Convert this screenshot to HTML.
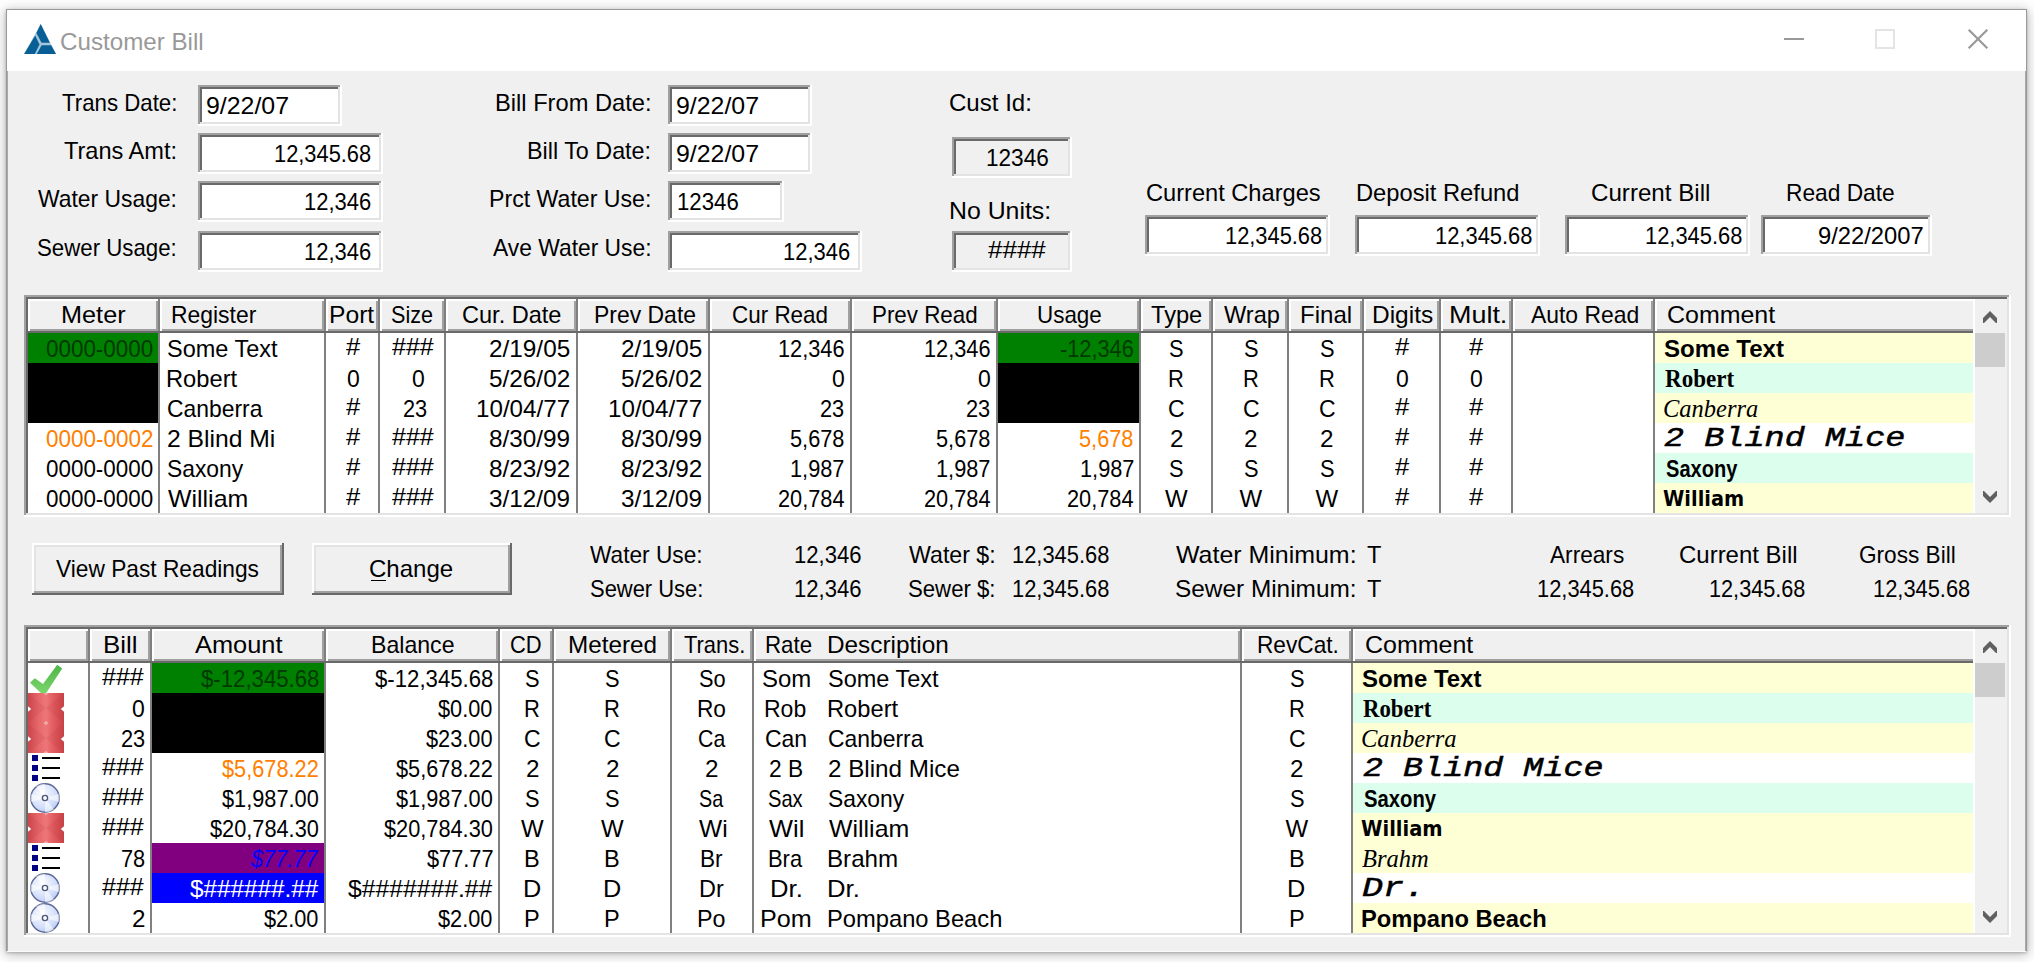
<!DOCTYPE html>
<html lang="en"><head><meta charset="utf-8"><title>Customer Bill</title>
<style>
html,body{margin:0;padding:0}
body{width:2034px;height:962px;position:relative;overflow:hidden;background:#fff;font-family:"Liberation Sans",sans-serif;font-size:24px;color:#000}
.win{position:absolute;left:6px;top:9px;width:2019px;height:941px;border:1px solid;border-color:#9a9a9a #9a9a9a #fafafa #9a9a9a;background:#f0f0f0;box-shadow:0 2px 12px 1px rgba(0,0,0,.25),0 1px 3px rgba(0,0,0,.22)}
.titlebar{position:absolute;left:0;top:0;right:0;height:61px;background:#fff}
.client{position:absolute;left:0;top:61px;right:0;bottom:0;border-left:1px solid #a8a8a8;border-right:1px solid #a8a8a8}
.t{position:absolute;white-space:pre;line-height:30px;height:30px;transform-origin:0 0}
.fi{font-style:italic}
.fb{font-weight:bold}
.fsb{font-family:"Liberation Serif",serif;font-weight:bold}
.fsi{font-family:"Liberation Serif",serif;font-style:italic}
.fm{font-family:"Liberation Mono",monospace;font-style:italic;-webkit-text-stroke:.5px #000}
.fd{font-family:"DejaVu Sans",sans-serif;font-weight:bold}
.a,.r{position:absolute}
.sunk{position:absolute;background:#fff;box-shadow:inset -2px -2px #fff,inset 2px 2px #a0a0a0,inset -4px -4px #e3e3e3,inset 4px 4px #696969}
.sunk.gray{background:#f0f0f0}
.hd{position:absolute;background:#f0f0f0;box-shadow:inset 2px 2px #fff,inset -2px -2px #a0a0a0}
.btn{position:absolute;background:#f0f0f0;box-shadow:inset -2px -2px #696969,inset 2px 2px #fff,inset -4px -4px #a0a0a0,inset 4px 4px #e3e3e3}
</style></head>
<body>
<div class="win"><div class="titlebar"></div><div class="client"></div></div>
<svg class="a" style="left:22px;top:22px" width="38" height="36" viewBox="22 22 38 36"><path d="M40.7 24.1 L56 53.9 L24.1 53.9 Z" fill="#a5c6db"/><g fill="#075f96">
<path d="M40.7 24.1 L49.9 42.7 L41.5 42.7 L36.4 33 Z"/>
<path d="M35.2 35.4 L39.5 44.5 L34.8 53.9 L24.1 53.9 Z"/>
<path d="M41.6 45.3 L51.2 45.3 L56 53.9 L36.8 53.9 Z"/>
</g></svg>
<span class="t" style="left:59.9px;top:27.0px;transform:scaleX(1.007);color:#999">Customer Bill</span>
<svg class="a" style="left:1780px;top:25px" width="220" height="30" viewBox="1780 25 220 30">
<rect x="1784" y="38" width="20" height="2" fill="#999"/>
<rect x="1876" y="30" width="18" height="18" fill="none" stroke="#e4e4e4" stroke-width="2"/>
<path d="M1968.7 29.7 L1987.3 48.3 M1987.3 29.7 L1968.7 48.3" stroke="#999" stroke-width="2.2" fill="none"/>
</svg>
<span class="t" style="left:61.5px;top:88.0px;transform:scaleX(0.927)">Trans Date:</span>
<span class="t" style="left:64.0px;top:136.0px;transform:scaleX(0.982)">Trans Amt:</span>
<span class="t" style="left:38.1px;top:184.0px;transform:scaleX(0.953)">Water Usage:</span>
<span class="t" style="left:37.2px;top:233.0px;transform:scaleX(0.927)">Sewer Usage:</span>
<div class="sunk" style="left:198px;top:85px;width:144px;height:41px"></div>
<span class="t" style="left:206.2px;top:91.2px;transform:scaleX(1.037)">9/22/07</span>
<div class="sunk" style="left:198px;top:133px;width:185px;height:41px"></div>
<span class="t" style="left:273.8px;top:139.2px;transform:scaleX(0.910)">12,345.68</span>
<div class="sunk" style="left:198px;top:181px;width:185px;height:41px"></div>
<span class="t" style="left:303.9px;top:187.2px;transform:scaleX(0.915)">12,346</span>
<div class="sunk" style="left:198px;top:231px;width:185px;height:41px"></div>
<span class="t" style="left:303.9px;top:237.2px;transform:scaleX(0.915)">12,346</span>
<span class="t" style="left:494.6px;top:88.0px;transform:scaleX(0.986)">Bill From Date:</span>
<span class="t" style="left:527.1px;top:136.0px;transform:scaleX(0.972)">Bill To Date:</span>
<span class="t" style="left:488.8px;top:184.0px;transform:scaleX(0.964)">Prct Water Use:</span>
<span class="t" style="left:492.5px;top:233.0px;transform:scaleX(0.951)">Ave Water Use:</span>
<div class="sunk" style="left:668px;top:85px;width:144px;height:41px"></div>
<span class="t" style="left:676.2px;top:91.2px;transform:scaleX(1.037)">9/22/07</span>
<div class="sunk" style="left:668px;top:133px;width:144px;height:41px"></div>
<span class="t" style="left:676.2px;top:139.2px;transform:scaleX(1.037)">9/22/07</span>
<div class="sunk" style="left:668px;top:181px;width:116px;height:41px"></div>
<span class="t" style="left:677.3px;top:187.2px;transform:scaleX(0.925)">12346</span>
<div class="sunk" style="left:668px;top:231px;width:194px;height:41px"></div>
<span class="t" style="left:782.6px;top:237.2px;transform:scaleX(0.915)">12,346</span>
<span class="t" style="left:949.3px;top:87.5px;transform:scaleX(1.002)">Cust Id:</span>
<div class="sunk gray" style="left:952px;top:137px;width:120px;height:41px"></div>
<span class="t" style="left:985.9px;top:142.5px;transform:scaleX(0.941)">12346</span>
<span class="t" style="left:948.5px;top:195.5px;transform:scaleX(1.035)">No Units:</span>
<div class="sunk gray" style="left:952px;top:231px;width:120px;height:41px"></div>
<span class="t" style="left:987.9px;top:235.0px;transform:scaleX(1.082)">####</span>
<span class="t" style="left:1145.8px;top:177.5px;transform:scaleX(0.984)">Current Charges</span>
<div class="sunk" style="left:1145px;top:215px;width:185px;height:41px"></div>
<span class="t" style="left:1225.0px;top:221.2px;transform:scaleX(0.910)">12,345.68</span>
<span class="t" style="left:1355.9px;top:177.5px;transform:scaleX(0.988)">Deposit Refund</span>
<div class="sunk" style="left:1355px;top:215px;width:185px;height:41px"></div>
<span class="t" style="left:1434.8px;top:221.2px;transform:scaleX(0.913)">12,345.68</span>
<span class="t" style="left:1590.9px;top:177.5px;transform:scaleX(1.006)">Current Bill</span>
<div class="sunk" style="left:1565px;top:215px;width:185px;height:41px"></div>
<span class="t" style="left:1644.8px;top:221.2px;transform:scaleX(0.912)">12,345.68</span>
<span class="t" style="left:1785.8px;top:177.5px;transform:scaleX(0.947)">Read Date</span>
<div class="sunk" style="left:1761px;top:215px;width:171px;height:41px"></div>
<span class="t" style="left:1818.1px;top:221.2px;transform:scaleX(0.990)">9/22/2007</span>
<div class="sunk" style="left:24px;top:295px;width:1987px;height:222px"></div>
<div class="r" style="left:1655px;top:333px;width:318px;height:30px;background:#ffffd6"></div>
<div class="r" style="left:1655px;top:363px;width:318px;height:30px;background:#dcffed"></div>
<div class="r" style="left:1655px;top:393px;width:318px;height:30px;background:#ffffd6"></div>
<div class="r" style="left:1655px;top:423px;width:318px;height:30px;background:#ffffff"></div>
<div class="r" style="left:1655px;top:453px;width:318px;height:30px;background:#dcffed"></div>
<div class="r" style="left:1655px;top:483px;width:318px;height:30px;background:#ffffd6"></div>
<div class="r" style="left:28px;top:333px;width:130px;height:30px;background:#008000"></div>
<div class="r" style="left:28px;top:363px;width:130px;height:60px;background:#000"></div>
<div class="r" style="left:998px;top:333px;width:141px;height:30px;background:#008000"></div>
<div class="r" style="left:998px;top:363px;width:141px;height:60px;background:#000"></div>
<div class="r" style="left:158px;top:299px;width:2px;height:214px;background:#808080"></div>
<div class="r" style="left:324px;top:299px;width:2px;height:214px;background:#808080"></div>
<div class="r" style="left:378px;top:299px;width:2px;height:214px;background:#808080"></div>
<div class="r" style="left:444px;top:299px;width:2px;height:214px;background:#808080"></div>
<div class="r" style="left:576px;top:299px;width:2px;height:214px;background:#808080"></div>
<div class="r" style="left:708px;top:299px;width:2px;height:214px;background:#808080"></div>
<div class="r" style="left:850px;top:299px;width:2px;height:214px;background:#808080"></div>
<div class="r" style="left:996px;top:299px;width:2px;height:214px;background:#808080"></div>
<div class="r" style="left:1139px;top:299px;width:2px;height:214px;background:#808080"></div>
<div class="r" style="left:1211px;top:299px;width:2px;height:214px;background:#808080"></div>
<div class="r" style="left:1287px;top:299px;width:2px;height:214px;background:#808080"></div>
<div class="r" style="left:1362px;top:299px;width:2px;height:214px;background:#808080"></div>
<div class="r" style="left:1439px;top:299px;width:2px;height:214px;background:#808080"></div>
<div class="r" style="left:1511px;top:299px;width:2px;height:214px;background:#808080"></div>
<div class="r" style="left:1653px;top:299px;width:2px;height:214px;background:#808080"></div>
<div class="hd" style="left:28px;top:299px;width:130px;height:32px"></div>
<div class="hd" style="left:160px;top:299px;width:164px;height:32px"></div>
<div class="hd" style="left:326px;top:299px;width:52px;height:32px"></div>
<div class="hd" style="left:380px;top:299px;width:64px;height:32px"></div>
<div class="hd" style="left:446px;top:299px;width:130px;height:32px"></div>
<div class="hd" style="left:578px;top:299px;width:130px;height:32px"></div>
<div class="hd" style="left:710px;top:299px;width:140px;height:32px"></div>
<div class="hd" style="left:852px;top:299px;width:144px;height:32px"></div>
<div class="hd" style="left:998px;top:299px;width:141px;height:32px"></div>
<div class="hd" style="left:1141px;top:299px;width:70px;height:32px"></div>
<div class="hd" style="left:1213px;top:299px;width:74px;height:32px"></div>
<div class="hd" style="left:1289px;top:299px;width:73px;height:32px"></div>
<div class="hd" style="left:1364px;top:299px;width:75px;height:32px"></div>
<div class="hd" style="left:1441px;top:299px;width:70px;height:32px"></div>
<div class="hd" style="left:1513px;top:299px;width:140px;height:32px"></div>
<div class="hd" style="left:1655px;top:299px;width:320px;height:32px"></div>
<div class="r" style="left:1973px;top:299px;width:2px;height:34px;background:#fff"></div>
<div class="r" style="left:28px;top:331px;width:1945px;height:2px;background:#696969"></div>
<span class="t" style="left:61.2px;top:300.0px;transform:scaleX(1.053)">Meter</span>
<span class="t" style="left:170.7px;top:300.0px;transform:scaleX(0.954)">Register</span>
<span class="t" style="left:328.5px;top:300.0px;transform:scaleX(1.027)">Port</span>
<span class="t" style="left:391.2px;top:300.0px;transform:scaleX(0.899)">Size</span>
<span class="t" style="left:462.0px;top:300.0px;transform:scaleX(0.981)">Cur. Date</span>
<span class="t" style="left:593.5px;top:300.0px;transform:scaleX(0.956)">Prev Date</span>
<span class="t" style="left:731.8px;top:300.0px;transform:scaleX(0.935)">Cur Read</span>
<span class="t" style="left:871.5px;top:300.0px;transform:scaleX(0.932)">Prev Read</span>
<span class="t" style="left:1037.0px;top:300.0px;transform:scaleX(0.934)">Usage</span>
<span class="t" style="left:1150.9px;top:300.0px;transform:scaleX(0.985)">Type</span>
<span class="t" style="left:1223.5px;top:300.0px;transform:scaleX(0.983)">Wrap</span>
<span class="t" style="left:1300.0px;top:300.0px;transform:scaleX(1.002)">Final</span>
<span class="t" style="left:1372.4px;top:300.0px;transform:scaleX(1.019)">Digits</span>
<span class="t" style="left:1448.6px;top:300.0px;transform:scaleX(1.122)">Mult.</span>
<span class="t" style="left:1530.7px;top:300.0px;transform:scaleX(0.954)">Auto Read</span>
<span class="t" style="left:1666.7px;top:300.0px;transform:scaleX(1.040)">Comment</span>
<div class="r" style="left:1975px;top:299px;width:32px;height:214px;background:#f0f0f0"></div>
<div class="r" style="left:1975px;top:333px;width:30px;height:34px;background:#cdcdcd"></div>
<svg class="a" style="left:1983px;top:311px" width="14" height="12" viewBox="0 0 14 12"><path d="M7 0 L14 7 L14 12 L13 12 L7 6 L1 12 L0 12 L0 7 Z" fill="#606060"/></svg>
<svg class="a" style="left:1983px;top:491px" width="14" height="12" viewBox="0 0 14 12"><path d="M7 12 L14 5 L14 0 L13 0 L7 6 L1 0 L0 0 L0 5 Z" fill="#606060"/></svg>
<span class="t" style="left:45.8px;top:333.5px;transform:scaleX(0.934);color:#003a00">0000-0000</span>
<span class="t" style="left:167.3px;top:333.5px;transform:scaleX(0.979)">Some Text</span>
<span class="t" style="left:345.9px;top:332.0px;transform:scaleX(1.067)">#</span>
<span class="t" style="left:392.1px;top:332.0px;transform:scaleX(1.041)">###</span>
<span class="t" style="left:488.9px;top:333.5px;transform:scaleX(1.014)">2/19/05</span>
<span class="t" style="left:620.7px;top:333.5px;transform:scaleX(1.014)">2/19/05</span>
<span class="t" style="left:778.0px;top:333.5px;transform:scaleX(0.906)">12,346</span>
<span class="t" style="left:924.0px;top:333.5px;transform:scaleX(0.906)">12,346</span>
<span class="t" style="left:1060.1px;top:333.5px;transform:scaleX(0.906);color:#003a00">-12,346</span>
<span class="t" style="left:1169.2px;top:333.5px;transform:scaleX(0.909)">S</span>
<span class="t" style="left:1243.7px;top:333.5px;transform:scaleX(0.909)">S</span>
<span class="t" style="left:1319.7px;top:333.5px;transform:scaleX(0.909)">S</span>
<span class="t" style="left:1394.9px;top:332.0px;transform:scaleX(1.067)">#</span>
<span class="t" style="left:1468.9px;top:332.0px;transform:scaleX(1.067)">#</span>
<span class="t fb" style="left:1663.7px;top:333.5px;transform:scaleX(1.047);font-size:23px">Some Text</span>
<span class="t" style="left:166.4px;top:363.5px;transform:scaleX(0.987)">Robert</span>
<span class="t" style="left:346.7px;top:363.5px;transform:scaleX(0.957)">0</span>
<span class="t" style="left:411.7px;top:363.5px;transform:scaleX(0.957)">0</span>
<span class="t" style="left:489.2px;top:363.5px;transform:scaleX(1.014)">5/26/02</span>
<span class="t" style="left:621.0px;top:363.5px;transform:scaleX(1.014)">5/26/02</span>
<span class="t" style="left:831.7px;top:363.5px;transform:scaleX(0.957)">0</span>
<span class="t" style="left:977.7px;top:363.5px;transform:scaleX(0.957)">0</span>
<span class="t" style="left:1168.2px;top:363.5px;transform:scaleX(0.912)">R</span>
<span class="t" style="left:1242.7px;top:363.5px;transform:scaleX(0.912)">R</span>
<span class="t" style="left:1318.7px;top:363.5px;transform:scaleX(0.912)">R</span>
<span class="t" style="left:1395.7px;top:363.5px;transform:scaleX(0.957)">0</span>
<span class="t" style="left:1469.7px;top:363.5px;transform:scaleX(0.957)">0</span>
<span class="t fsb" style="left:1664.7px;top:363.5px;transform:scaleX(0.921);font-size:25px">Robert</span>
<span class="t" style="left:167.2px;top:393.5px;transform:scaleX(0.953)">Canberra</span>
<span class="t" style="left:345.9px;top:392.0px;transform:scaleX(1.067)">#</span>
<span class="t" style="left:402.8px;top:393.5px;transform:scaleX(0.906)">23</span>
<span class="t" style="left:476.3px;top:393.5px;transform:scaleX(1.007)">10/04/77</span>
<span class="t" style="left:608.1px;top:393.5px;transform:scaleX(1.007)">10/04/77</span>
<span class="t" style="left:820.3px;top:393.5px;transform:scaleX(0.906)">23</span>
<span class="t" style="left:966.3px;top:393.5px;transform:scaleX(0.906)">23</span>
<span class="t" style="left:1168.1px;top:393.5px;transform:scaleX(0.959)">C</span>
<span class="t" style="left:1242.6px;top:393.5px;transform:scaleX(0.959)">C</span>
<span class="t" style="left:1318.6px;top:393.5px;transform:scaleX(0.959)">C</span>
<span class="t" style="left:1394.9px;top:392.0px;transform:scaleX(1.067)">#</span>
<span class="t" style="left:1468.9px;top:392.0px;transform:scaleX(1.067)">#</span>
<span class="t fsi" style="left:1663.1px;top:393.5px;transform:scaleX(0.979);font-size:25px">Canberra</span>
<span class="t" style="left:45.8px;top:423.5px;transform:scaleX(0.936);color:#ff8000">0000-0002</span>
<span class="t" style="left:167.1px;top:423.5px;transform:scaleX(1.028)">2 Blind Mi</span>
<span class="t" style="left:345.9px;top:422.0px;transform:scaleX(1.067)">#</span>
<span class="t" style="left:392.1px;top:422.0px;transform:scaleX(1.041)">###</span>
<span class="t" style="left:489.2px;top:423.5px;transform:scaleX(1.013)">8/30/99</span>
<span class="t" style="left:621.0px;top:423.5px;transform:scaleX(1.013)">8/30/99</span>
<span class="t" style="left:789.9px;top:423.5px;transform:scaleX(0.906)">5,678</span>
<span class="t" style="left:935.9px;top:423.5px;transform:scaleX(0.906)">5,678</span>
<span class="t" style="left:1079.2px;top:423.5px;transform:scaleX(0.906);color:#ff8000">5,678</span>
<span class="t" style="left:1169.7px;top:423.5px;transform:scaleX(1.011)">2</span>
<span class="t" style="left:1244.2px;top:423.5px;transform:scaleX(1.011)">2</span>
<span class="t" style="left:1320.2px;top:423.5px;transform:scaleX(1.011)">2</span>
<span class="t" style="left:1394.9px;top:422.0px;transform:scaleX(1.067)">#</span>
<span class="t" style="left:1468.9px;top:422.0px;transform:scaleX(1.067)">#</span>
<span class="t fm" style="left:1664.4px;top:423.5px;transform:scaleX(1.197);font-size:28px">2 Blind Mice</span>
<span class="t" style="left:45.8px;top:453.5px;transform:scaleX(0.934)">0000-0000</span>
<span class="t" style="left:167.3px;top:453.5px;transform:scaleX(0.952)">Saxony</span>
<span class="t" style="left:345.9px;top:452.0px;transform:scaleX(1.067)">#</span>
<span class="t" style="left:392.1px;top:452.0px;transform:scaleX(1.041)">###</span>
<span class="t" style="left:489.2px;top:453.5px;transform:scaleX(1.014)">8/23/92</span>
<span class="t" style="left:621.0px;top:453.5px;transform:scaleX(1.014)">8/23/92</span>
<span class="t" style="left:790.2px;top:453.5px;transform:scaleX(0.906)">1,987</span>
<span class="t" style="left:936.2px;top:453.5px;transform:scaleX(0.906)">1,987</span>
<span class="t" style="left:1079.5px;top:453.5px;transform:scaleX(0.906)">1,987</span>
<span class="t" style="left:1169.2px;top:453.5px;transform:scaleX(0.909)">S</span>
<span class="t" style="left:1243.7px;top:453.5px;transform:scaleX(0.909)">S</span>
<span class="t" style="left:1319.7px;top:453.5px;transform:scaleX(0.909)">S</span>
<span class="t" style="left:1394.9px;top:452.0px;transform:scaleX(1.067)">#</span>
<span class="t" style="left:1468.9px;top:452.0px;transform:scaleX(1.067)">#</span>
<span class="t fb" style="left:1665.6px;top:453.5px;transform:scaleX(0.836)">Saxony</span>
<span class="t" style="left:45.8px;top:483.5px;transform:scaleX(0.934)">0000-0000</span>
<span class="t" style="left:168.3px;top:483.5px;transform:scaleX(1.038)">William</span>
<span class="t" style="left:345.9px;top:482.0px;transform:scaleX(1.067)">#</span>
<span class="t" style="left:392.1px;top:482.0px;transform:scaleX(1.041)">###</span>
<span class="t" style="left:489.3px;top:483.5px;transform:scaleX(1.011)">3/12/09</span>
<span class="t" style="left:621.1px;top:483.5px;transform:scaleX(1.011)">3/12/09</span>
<span class="t" style="left:777.7px;top:483.5px;transform:scaleX(0.906)">20,784</span>
<span class="t" style="left:923.7px;top:483.5px;transform:scaleX(0.906)">20,784</span>
<span class="t" style="left:1067.0px;top:483.5px;transform:scaleX(0.906)">20,784</span>
<span class="t" style="left:1165.1px;top:483.5px;transform:scaleX(1.000)">W</span>
<span class="t" style="left:1239.6px;top:483.5px;transform:scaleX(1.000)">W</span>
<span class="t" style="left:1315.6px;top:483.5px;transform:scaleX(1.000)">W</span>
<span class="t" style="left:1394.9px;top:482.0px;transform:scaleX(1.067)">#</span>
<span class="t" style="left:1468.9px;top:482.0px;transform:scaleX(1.067)">#</span>
<span class="t fd" style="left:1663.1px;top:483.5px;transform:scaleX(0.880);font-size:22px">William</span>
<div class="btn" style="left:32px;top:543px;width:252px;height:52px"></div>
<span class="t" style="left:55.9px;top:554.0px;transform:scaleX(0.947)">View Past Readings</span>
<div class="btn" style="left:312px;top:543px;width:200px;height:52px"></div>
<span class="t" style="left:369.2px;top:554.0px;transform:scaleX(1.001)">Change</span>
<div class="r" style="left:370.5px;top:579.5px;width:15.3px;height:1.6px;background:#000"></div>
<span class="t" style="left:590.4px;top:540.0px;transform:scaleX(0.945)">Water Use:</span>
<span class="t" style="left:793.8px;top:540.0px;transform:scaleX(0.919)">12,346</span>
<span class="t" style="left:908.6px;top:540.0px;transform:scaleX(0.965)">Water $:</span>
<span class="t" style="left:1012.3px;top:540.0px;transform:scaleX(0.912)">12,345.68</span>
<span class="t" style="left:1175.8px;top:540.0px;transform:scaleX(1.039)">Water Minimum:</span>
<span class="t" style="left:1367.1px;top:540.0px;transform:scaleX(0.983)">T</span>
<span class="t" style="left:589.5px;top:574.0px;transform:scaleX(0.914)">Sewer Use:</span>
<span class="t" style="left:793.8px;top:574.0px;transform:scaleX(0.919)">12,346</span>
<span class="t" style="left:907.7px;top:574.0px;transform:scaleX(0.924)">Sewer $:</span>
<span class="t" style="left:1012.3px;top:574.0px;transform:scaleX(0.912)">12,345.68</span>
<span class="t" style="left:1174.8px;top:574.0px;transform:scaleX(1.016)">Sewer Minimum:</span>
<span class="t" style="left:1367.1px;top:574.0px;transform:scaleX(0.983)">T</span>
<span class="t" style="left:1549.9px;top:540.0px;transform:scaleX(0.943)">Arrears</span>
<span class="t" style="left:1679.0px;top:540.0px;transform:scaleX(0.999)">Current Bill</span>
<span class="t" style="left:1859.3px;top:540.0px;transform:scaleX(0.942)">Gross Bill</span>
<span class="t" style="left:1536.6px;top:574.0px;transform:scaleX(0.911)">12,345.68</span>
<span class="t" style="left:1709.2px;top:574.0px;transform:scaleX(0.903)">12,345.68</span>
<span class="t" style="left:1872.8px;top:574.0px;transform:scaleX(0.911)">12,345.68</span>
<div class="sunk" style="left:24px;top:625px;width:1987px;height:312px"></div>
<div class="r" style="left:1353px;top:663px;width:620px;height:30px;background:#ffffd6"></div>
<div class="r" style="left:1353px;top:693px;width:620px;height:30px;background:#dcffed"></div>
<div class="r" style="left:1353px;top:723px;width:620px;height:30px;background:#ffffd6"></div>
<div class="r" style="left:1353px;top:753px;width:620px;height:30px;background:#ffffff"></div>
<div class="r" style="left:1353px;top:783px;width:620px;height:30px;background:#dcffed"></div>
<div class="r" style="left:1353px;top:813px;width:620px;height:30px;background:#ffffd6"></div>
<div class="r" style="left:1353px;top:843px;width:620px;height:30px;background:#ffffd6"></div>
<div class="r" style="left:1353px;top:873px;width:620px;height:30px;background:#ffffff"></div>
<div class="r" style="left:1353px;top:903px;width:620px;height:30px;background:#ffffd6"></div>
<div class="r" style="left:152px;top:663px;width:172px;height:30px;background:#008000"></div>
<div class="r" style="left:152px;top:693px;width:172px;height:60px;background:#000"></div>
<div class="r" style="left:152px;top:843px;width:172px;height:30px;background:#800080"></div>
<div class="r" style="left:152px;top:873px;width:172px;height:30px;background:#0000ff"></div>
<div class="r" style="left:88px;top:629px;width:2px;height:304px;background:#808080"></div>
<div class="r" style="left:150px;top:629px;width:2px;height:304px;background:#808080"></div>
<div class="r" style="left:324px;top:629px;width:2px;height:304px;background:#808080"></div>
<div class="r" style="left:498px;top:629px;width:2px;height:304px;background:#808080"></div>
<div class="r" style="left:552px;top:629px;width:2px;height:304px;background:#808080"></div>
<div class="r" style="left:670px;top:629px;width:2px;height:304px;background:#808080"></div>
<div class="r" style="left:752px;top:629px;width:2px;height:304px;background:#808080"></div>
<div class="r" style="left:1240px;top:629px;width:2px;height:304px;background:#808080"></div>
<div class="r" style="left:1351px;top:629px;width:2px;height:304px;background:#808080"></div>
<div class="hd" style="left:28px;top:629px;width:60px;height:32px"></div>
<div class="hd" style="left:90px;top:629px;width:60px;height:32px"></div>
<div class="hd" style="left:152px;top:629px;width:172px;height:32px"></div>
<div class="hd" style="left:326px;top:629px;width:172px;height:32px"></div>
<div class="hd" style="left:500px;top:629px;width:52px;height:32px"></div>
<div class="hd" style="left:554px;top:629px;width:116px;height:32px"></div>
<div class="hd" style="left:672px;top:629px;width:80px;height:32px"></div>
<div class="hd" style="left:754px;top:629px;width:486px;height:32px"></div>
<div class="hd" style="left:1242px;top:629px;width:109px;height:32px"></div>
<div class="hd" style="left:1353px;top:629px;width:622px;height:32px"></div>
<div class="r" style="left:1973px;top:629px;width:2px;height:34px;background:#fff"></div>
<div class="r" style="left:28px;top:661px;width:1945px;height:2px;background:#696969"></div>
<span class="t" style="left:102.9px;top:630.0px;transform:scaleX(1.075)">Bill</span>
<span class="t" style="left:194.8px;top:630.0px;transform:scaleX(1.058)">Amount</span>
<span class="t" style="left:371.1px;top:630.0px;transform:scaleX(0.963)">Balance</span>
<span class="t" style="left:510.2px;top:630.0px;transform:scaleX(0.914)">CD</span>
<span class="t" style="left:567.8px;top:630.0px;transform:scaleX(1.011)">Metered</span>
<span class="t" style="left:683.5px;top:630.0px;transform:scaleX(0.913)">Trans.</span>
<span class="t" style="left:764.8px;top:630.0px;transform:scaleX(0.930)">Rate</span>
<span class="t" style="left:1256.5px;top:630.0px;transform:scaleX(0.944)">RevCat.</span>
<span class="t" style="left:1364.9px;top:630.0px;transform:scaleX(1.041)">Comment</span>
<span class="t" style="left:827.2px;top:630.0px;transform:scaleX(1.014)">Description</span>
<div class="r" style="left:1975px;top:629px;width:32px;height:304px;background:#f0f0f0"></div>
<div class="r" style="left:1975px;top:663px;width:30px;height:34px;background:#cdcdcd"></div>
<svg class="a" style="left:1983px;top:641px" width="14" height="12" viewBox="0 0 14 12"><path d="M7 0 L14 7 L14 12 L13 12 L7 6 L1 12 L0 12 L0 7 Z" fill="#606060"/></svg>
<svg class="a" style="left:1983px;top:911px" width="14" height="12" viewBox="0 0 14 12"><path d="M7 12 L14 5 L14 0 L13 0 L7 6 L1 0 L0 0 L0 5 Z" fill="#606060"/></svg>
<svg class="a" style="left:28px;top:663px" width="36" height="30" viewBox="0 0 36 30"><defs><linearGradient id="gc0" x1="0" y1="0" x2="0" y2="1"><stop offset="0" stop-color="#4db548"/><stop offset="1" stop-color="#7bd66a"/></linearGradient></defs><path d="M2 19.8 L6.8 15.2 L15 21 L29.2 1.8 L34.2 5.6 L18.2 30 L13 30 Z" fill="url(#gc0)"/></svg>
<span class="t" style="left:102.2px;top:662.0px;transform:scaleX(1.041)">###</span>
<span class="t" style="left:200.6px;top:663.5px;transform:scaleX(0.924);color:#003a00">$-12,345.68</span>
<span class="t" style="left:374.6px;top:663.5px;transform:scaleX(0.924)">$-12,345.68</span>
<span class="t" style="left:525.2px;top:663.5px;transform:scaleX(0.909)">S</span>
<span class="t" style="left:605.2px;top:663.5px;transform:scaleX(0.909)">S</span>
<span class="t" style="left:698.6px;top:663.5px;transform:scaleX(0.906)">So</span>
<span class="t" style="left:761.6px;top:663.5px;transform:scaleX(0.999)">Som</span>
<span class="t" style="left:827.9px;top:663.5px;transform:scaleX(0.979)">Some Text</span>
<span class="t" style="left:1289.7px;top:663.5px;transform:scaleX(0.909)">S</span>
<span class="t fb" style="left:1362.0px;top:663.5px;transform:scaleX(1.042);font-size:23px">Some Text</span>
<svg class="a" style="left:28px;top:693px" width="36" height="30" viewBox="0 0 36 30"><defs><linearGradient id="gr1" x1="0" y1="0" x2="1" y2="0"><stop offset="0" stop-color="#cf494e"/><stop offset="0.3" stop-color="#e6686b"/><stop offset="0.5" stop-color="#ee7678"/><stop offset="0.72" stop-color="#e05a5e"/><stop offset="1" stop-color="#c94349"/></linearGradient></defs><rect width="36" height="30" fill="url(#gr1)"/><path d="M0 0 L18 15 L0 30 Z M36 0 L18 15 L36 30 Z" fill="#b8373d" opacity=".14"/><path d="M0 13.2 L3.2 16 L0 18.8 Z M36 13.2 L32.8 16 L36 18.8 Z" fill="#fff"/><path d="M15.4 0 L18 2.2 L20.6 0 Z M15.4 30 L18 27.8 L20.6 30 Z" fill="#f3a6a7"/></svg>
<span class="t" style="left:132.0px;top:693.5px;transform:scaleX(0.957)">0</span>
<span class="t" style="left:438.4px;top:693.5px;transform:scaleX(0.906)">$0.00</span>
<span class="t" style="left:524.2px;top:693.5px;transform:scaleX(0.912)">R</span>
<span class="t" style="left:604.2px;top:693.5px;transform:scaleX(0.912)">R</span>
<span class="t" style="left:697.0px;top:693.5px;transform:scaleX(0.944)">Ro</span>
<span class="t" style="left:764.4px;top:693.5px;transform:scaleX(0.959)">Rob</span>
<span class="t" style="left:827.0px;top:693.5px;transform:scaleX(0.987)">Robert</span>
<span class="t" style="left:1288.7px;top:693.5px;transform:scaleX(0.912)">R</span>
<span class="t fsb" style="left:1363.0px;top:693.5px;transform:scaleX(0.910);font-size:25px">Robert</span>
<svg class="a" style="left:28px;top:723px" width="36" height="30" viewBox="0 0 36 30"><defs><linearGradient id="gr2" x1="0" y1="0" x2="1" y2="0"><stop offset="0" stop-color="#cf494e"/><stop offset="0.3" stop-color="#e6686b"/><stop offset="0.5" stop-color="#ee7678"/><stop offset="0.72" stop-color="#e05a5e"/><stop offset="1" stop-color="#c94349"/></linearGradient></defs><rect width="36" height="30" fill="url(#gr2)"/><path d="M0 0 L18 15 L0 30 Z M36 0 L18 15 L36 30 Z" fill="#b8373d" opacity=".14"/><path d="M0 13.2 L3.2 16 L0 18.8 Z M36 13.2 L32.8 16 L36 18.8 Z" fill="#fff"/><path d="M15.4 0 L18 2.2 L20.6 0 Z M15.4 30 L18 27.8 L20.6 30 Z" fill="#f3a6a7"/></svg>
<span class="t" style="left:120.6px;top:723.5px;transform:scaleX(0.906)">23</span>
<span class="t" style="left:426.4px;top:723.5px;transform:scaleX(0.906)">$23.00</span>
<span class="t" style="left:524.1px;top:723.5px;transform:scaleX(0.959)">C</span>
<span class="t" style="left:604.1px;top:723.5px;transform:scaleX(0.959)">C</span>
<span class="t" style="left:697.8px;top:723.5px;transform:scaleX(0.888)">Ca</span>
<span class="t" style="left:765.2px;top:723.5px;transform:scaleX(0.956)">Can</span>
<span class="t" style="left:827.8px;top:723.5px;transform:scaleX(0.953)">Canberra</span>
<span class="t" style="left:1288.6px;top:723.5px;transform:scaleX(0.959)">C</span>
<span class="t fsi" style="left:1361.3px;top:723.5px;transform:scaleX(0.982);font-size:25px">Canberra</span>
<svg class="a" style="left:28px;top:753px" width="36" height="30" viewBox="0 0 36 30"><g fill="#000080"><rect x="4" y="2" width="6" height="6"/><rect x="4" y="12" width="6" height="6"/><rect x="4" y="22" width="6" height="6"/></g><g fill="#000"><rect x="14" y="4" width="18" height="2"/><rect x="14" y="14" width="18" height="2"/><rect x="14" y="24" width="18" height="2"/></g></svg>
<span class="t" style="left:102.2px;top:752.0px;transform:scaleX(1.041)">###</span>
<span class="t" style="left:222.4px;top:753.5px;transform:scaleX(0.906);color:#ff8000">$5,678.22</span>
<span class="t" style="left:396.4px;top:753.5px;transform:scaleX(0.906)">$5,678.22</span>
<span class="t" style="left:525.7px;top:753.5px;transform:scaleX(1.011)">2</span>
<span class="t" style="left:605.7px;top:753.5px;transform:scaleX(1.011)">2</span>
<span class="t" style="left:705.2px;top:753.5px;transform:scaleX(1.011)">2</span>
<span class="t" style="left:769.0px;top:753.5px;transform:scaleX(0.946)">2 B</span>
<span class="t" style="left:827.7px;top:753.5px;transform:scaleX(1.009)">2 Blind Mice</span>
<span class="t" style="left:1290.2px;top:753.5px;transform:scaleX(1.011)">2</span>
<span class="t fm" style="left:1363.3px;top:753.5px;transform:scaleX(1.193);font-size:28px">2 Blind Mice</span>
<svg class="a" style="left:28px;top:783px" width="36" height="30" viewBox="0 0 36 30"><defs><radialGradient id="gd4" cx="0.4" cy="0.35" r="0.8"><stop offset="0" stop-color="#fdfdff"/><stop offset="0.6" stop-color="#d3defa"/><stop offset="1" stop-color="#a9bdf0"/></radialGradient></defs><circle cx="17" cy="15" r="14.2" fill="url(#gd4)" stroke="#5a6796" stroke-width="1.4"/><path d="M17 15 L8 3.5 A14.5 14.5 0 0 1 17 0.8 Z M17 15 L26 26.5 A14.5 14.5 0 0 1 17 29.2 Z M17 15 L3 11 A14.5 14.5 0 0 0 3 19 Z M17 15 L31 11 A14.5 14.5 0 0 1 31 19 Z" fill="#fff" opacity=".55"/><circle cx="17" cy="15" r="2.6" fill="#fff" stroke="#4e587c" stroke-width="1.4"/></svg>
<span class="t" style="left:102.2px;top:782.0px;transform:scaleX(1.041)">###</span>
<span class="t" style="left:222.2px;top:783.5px;transform:scaleX(0.906)">$1,987.00</span>
<span class="t" style="left:396.2px;top:783.5px;transform:scaleX(0.906)">$1,987.00</span>
<span class="t" style="left:525.2px;top:783.5px;transform:scaleX(0.909)">S</span>
<span class="t" style="left:605.2px;top:783.5px;transform:scaleX(0.909)">S</span>
<span class="t" style="left:699.4px;top:783.5px;transform:scaleX(0.825)">Sa</span>
<span class="t" style="left:768.3px;top:783.5px;transform:scaleX(0.838)">Sax</span>
<span class="t" style="left:827.9px;top:783.5px;transform:scaleX(0.952)">Saxony</span>
<span class="t" style="left:1289.7px;top:783.5px;transform:scaleX(0.909)">S</span>
<span class="t fb" style="left:1363.6px;top:783.5px;transform:scaleX(0.844)">Saxony</span>
<svg class="a" style="left:28px;top:813px" width="36" height="30" viewBox="0 0 36 30"><defs><linearGradient id="gr5" x1="0" y1="0" x2="1" y2="0"><stop offset="0" stop-color="#cf494e"/><stop offset="0.3" stop-color="#e6686b"/><stop offset="0.5" stop-color="#ee7678"/><stop offset="0.72" stop-color="#e05a5e"/><stop offset="1" stop-color="#c94349"/></linearGradient></defs><rect width="36" height="30" fill="url(#gr5)"/><path d="M0 0 L18 15 L0 30 Z M36 0 L18 15 L36 30 Z" fill="#b8373d" opacity=".14"/><path d="M0 13.2 L3.2 16 L0 18.8 Z M36 13.2 L32.8 16 L36 18.8 Z" fill="#fff"/><path d="M15.4 0 L18 2.2 L20.6 0 Z M15.4 30 L18 27.8 L20.6 30 Z" fill="#f3a6a7"/></svg>
<span class="t" style="left:102.2px;top:812.0px;transform:scaleX(1.041)">###</span>
<span class="t" style="left:210.1px;top:813.5px;transform:scaleX(0.906)">$20,784.30</span>
<span class="t" style="left:384.1px;top:813.5px;transform:scaleX(0.906)">$20,784.30</span>
<span class="t" style="left:521.1px;top:813.5px;transform:scaleX(1.000)">W</span>
<span class="t" style="left:601.1px;top:813.5px;transform:scaleX(1.000)">W</span>
<span class="t" style="left:698.5px;top:813.5px;transform:scaleX(1.021)">Wi</span>
<span class="t" style="left:769.1px;top:813.5px;transform:scaleX(1.059)">Wil</span>
<span class="t" style="left:828.9px;top:813.5px;transform:scaleX(1.038)">William</span>
<span class="t" style="left:1285.6px;top:813.5px;transform:scaleX(1.000)">W</span>
<span class="t fd" style="left:1361.2px;top:813.5px;transform:scaleX(0.885);font-size:22px">William</span>
<svg class="a" style="left:28px;top:843px" width="36" height="30" viewBox="0 0 36 30"><g fill="#000080"><rect x="4" y="2" width="6" height="6"/><rect x="4" y="12" width="6" height="6"/><rect x="4" y="22" width="6" height="6"/></g><g fill="#000"><rect x="14" y="4" width="18" height="2"/><rect x="14" y="14" width="18" height="2"/><rect x="14" y="24" width="18" height="2"/></g></svg>
<span class="t" style="left:120.5px;top:843.5px;transform:scaleX(0.906)">78</span>
<span class="t fi" style="left:250.8px;top:843.5px;transform:scaleX(0.906);color:#0000ff">$77.77</span>
<span class="t" style="left:426.7px;top:843.5px;transform:scaleX(0.906)">$77.77</span>
<span class="t" style="left:524.3px;top:843.5px;transform:scaleX(0.980)">B</span>
<span class="t" style="left:604.3px;top:843.5px;transform:scaleX(0.980)">B</span>
<span class="t" style="left:699.9px;top:843.5px;transform:scaleX(0.943)">Br</span>
<span class="t" style="left:768.0px;top:843.5px;transform:scaleX(0.913)">Bra</span>
<span class="t" style="left:827.0px;top:843.5px;transform:scaleX(1.007)">Brahm</span>
<span class="t" style="left:1288.8px;top:843.5px;transform:scaleX(0.980)">B</span>
<span class="t fsi" style="left:1361.6px;top:843.5px;transform:scaleX(0.981);font-size:25px">Brahm</span>
<svg class="a" style="left:28px;top:873px" width="36" height="30" viewBox="0 0 36 30"><defs><radialGradient id="gd7" cx="0.4" cy="0.35" r="0.8"><stop offset="0" stop-color="#fdfdff"/><stop offset="0.6" stop-color="#d3defa"/><stop offset="1" stop-color="#a9bdf0"/></radialGradient></defs><circle cx="17" cy="15" r="14.2" fill="url(#gd7)" stroke="#5a6796" stroke-width="1.4"/><path d="M17 15 L8 3.5 A14.5 14.5 0 0 1 17 0.8 Z M17 15 L26 26.5 A14.5 14.5 0 0 1 17 29.2 Z M17 15 L3 11 A14.5 14.5 0 0 0 3 19 Z M17 15 L31 11 A14.5 14.5 0 0 1 31 19 Z" fill="#fff" opacity=".55"/><circle cx="17" cy="15" r="2.6" fill="#fff" stroke="#4e587c" stroke-width="1.4"/></svg>
<span class="t" style="left:102.2px;top:872.0px;transform:scaleX(1.041)">###</span>
<span class="t" style="left:189.7px;top:873.5px;transform:scaleX(1.012);color:#fff">$######.##</span>
<span class="t" style="left:347.9px;top:873.5px;transform:scaleX(1.029)">$#######.##</span>
<span class="t" style="left:522.9px;top:873.5px;transform:scaleX(1.053)">D</span>
<span class="t" style="left:602.9px;top:873.5px;transform:scaleX(1.053)">D</span>
<span class="t" style="left:698.8px;top:873.5px;transform:scaleX(0.978)">Dr</span>
<span class="t" style="left:769.7px;top:873.5px;transform:scaleX(1.068)">Dr.</span>
<span class="t" style="left:826.9px;top:873.5px;transform:scaleX(1.068)">Dr.</span>
<span class="t" style="left:1287.4px;top:873.5px;transform:scaleX(1.053)">D</span>
<span class="t fm" style="left:1362.4px;top:873.5px;transform:scaleX(1.254);font-size:28px">Dr.</span>
<svg class="a" style="left:28px;top:903px" width="36" height="30" viewBox="0 0 36 30"><defs><radialGradient id="gd8" cx="0.4" cy="0.35" r="0.8"><stop offset="0" stop-color="#fdfdff"/><stop offset="0.6" stop-color="#d3defa"/><stop offset="1" stop-color="#a9bdf0"/></radialGradient></defs><circle cx="17" cy="15" r="14.2" fill="url(#gd8)" stroke="#5a6796" stroke-width="1.4"/><path d="M17 15 L8 3.5 A14.5 14.5 0 0 1 17 0.8 Z M17 15 L26 26.5 A14.5 14.5 0 0 1 17 29.2 Z M17 15 L3 11 A14.5 14.5 0 0 0 3 19 Z M17 15 L31 11 A14.5 14.5 0 0 1 31 19 Z" fill="#fff" opacity=".55"/><circle cx="17" cy="15" r="2.6" fill="#fff" stroke="#4e587c" stroke-width="1.4"/></svg>
<span class="t" style="left:131.5px;top:903.5px;transform:scaleX(1.011)">2</span>
<span class="t" style="left:264.4px;top:903.5px;transform:scaleX(0.906)">$2.00</span>
<span class="t" style="left:438.4px;top:903.5px;transform:scaleX(0.906)">$2.00</span>
<span class="t" style="left:524.3px;top:903.5px;transform:scaleX(0.980)">P</span>
<span class="t" style="left:604.3px;top:903.5px;transform:scaleX(0.980)">P</span>
<span class="t" style="left:697.3px;top:903.5px;transform:scaleX(0.971)">Po</span>
<span class="t" style="left:759.9px;top:903.5px;transform:scaleX(1.049)">Pom</span>
<span class="t" style="left:827.0px;top:903.5px;transform:scaleX(0.988)">Pompano Beach</span>
<span class="t" style="left:1288.8px;top:903.5px;transform:scaleX(0.980)">P</span>
<span class="t fb" style="left:1361.2px;top:903.5px;transform:scaleX(1.030);font-size:23px">Pompano Beach</span>
</body></html>
